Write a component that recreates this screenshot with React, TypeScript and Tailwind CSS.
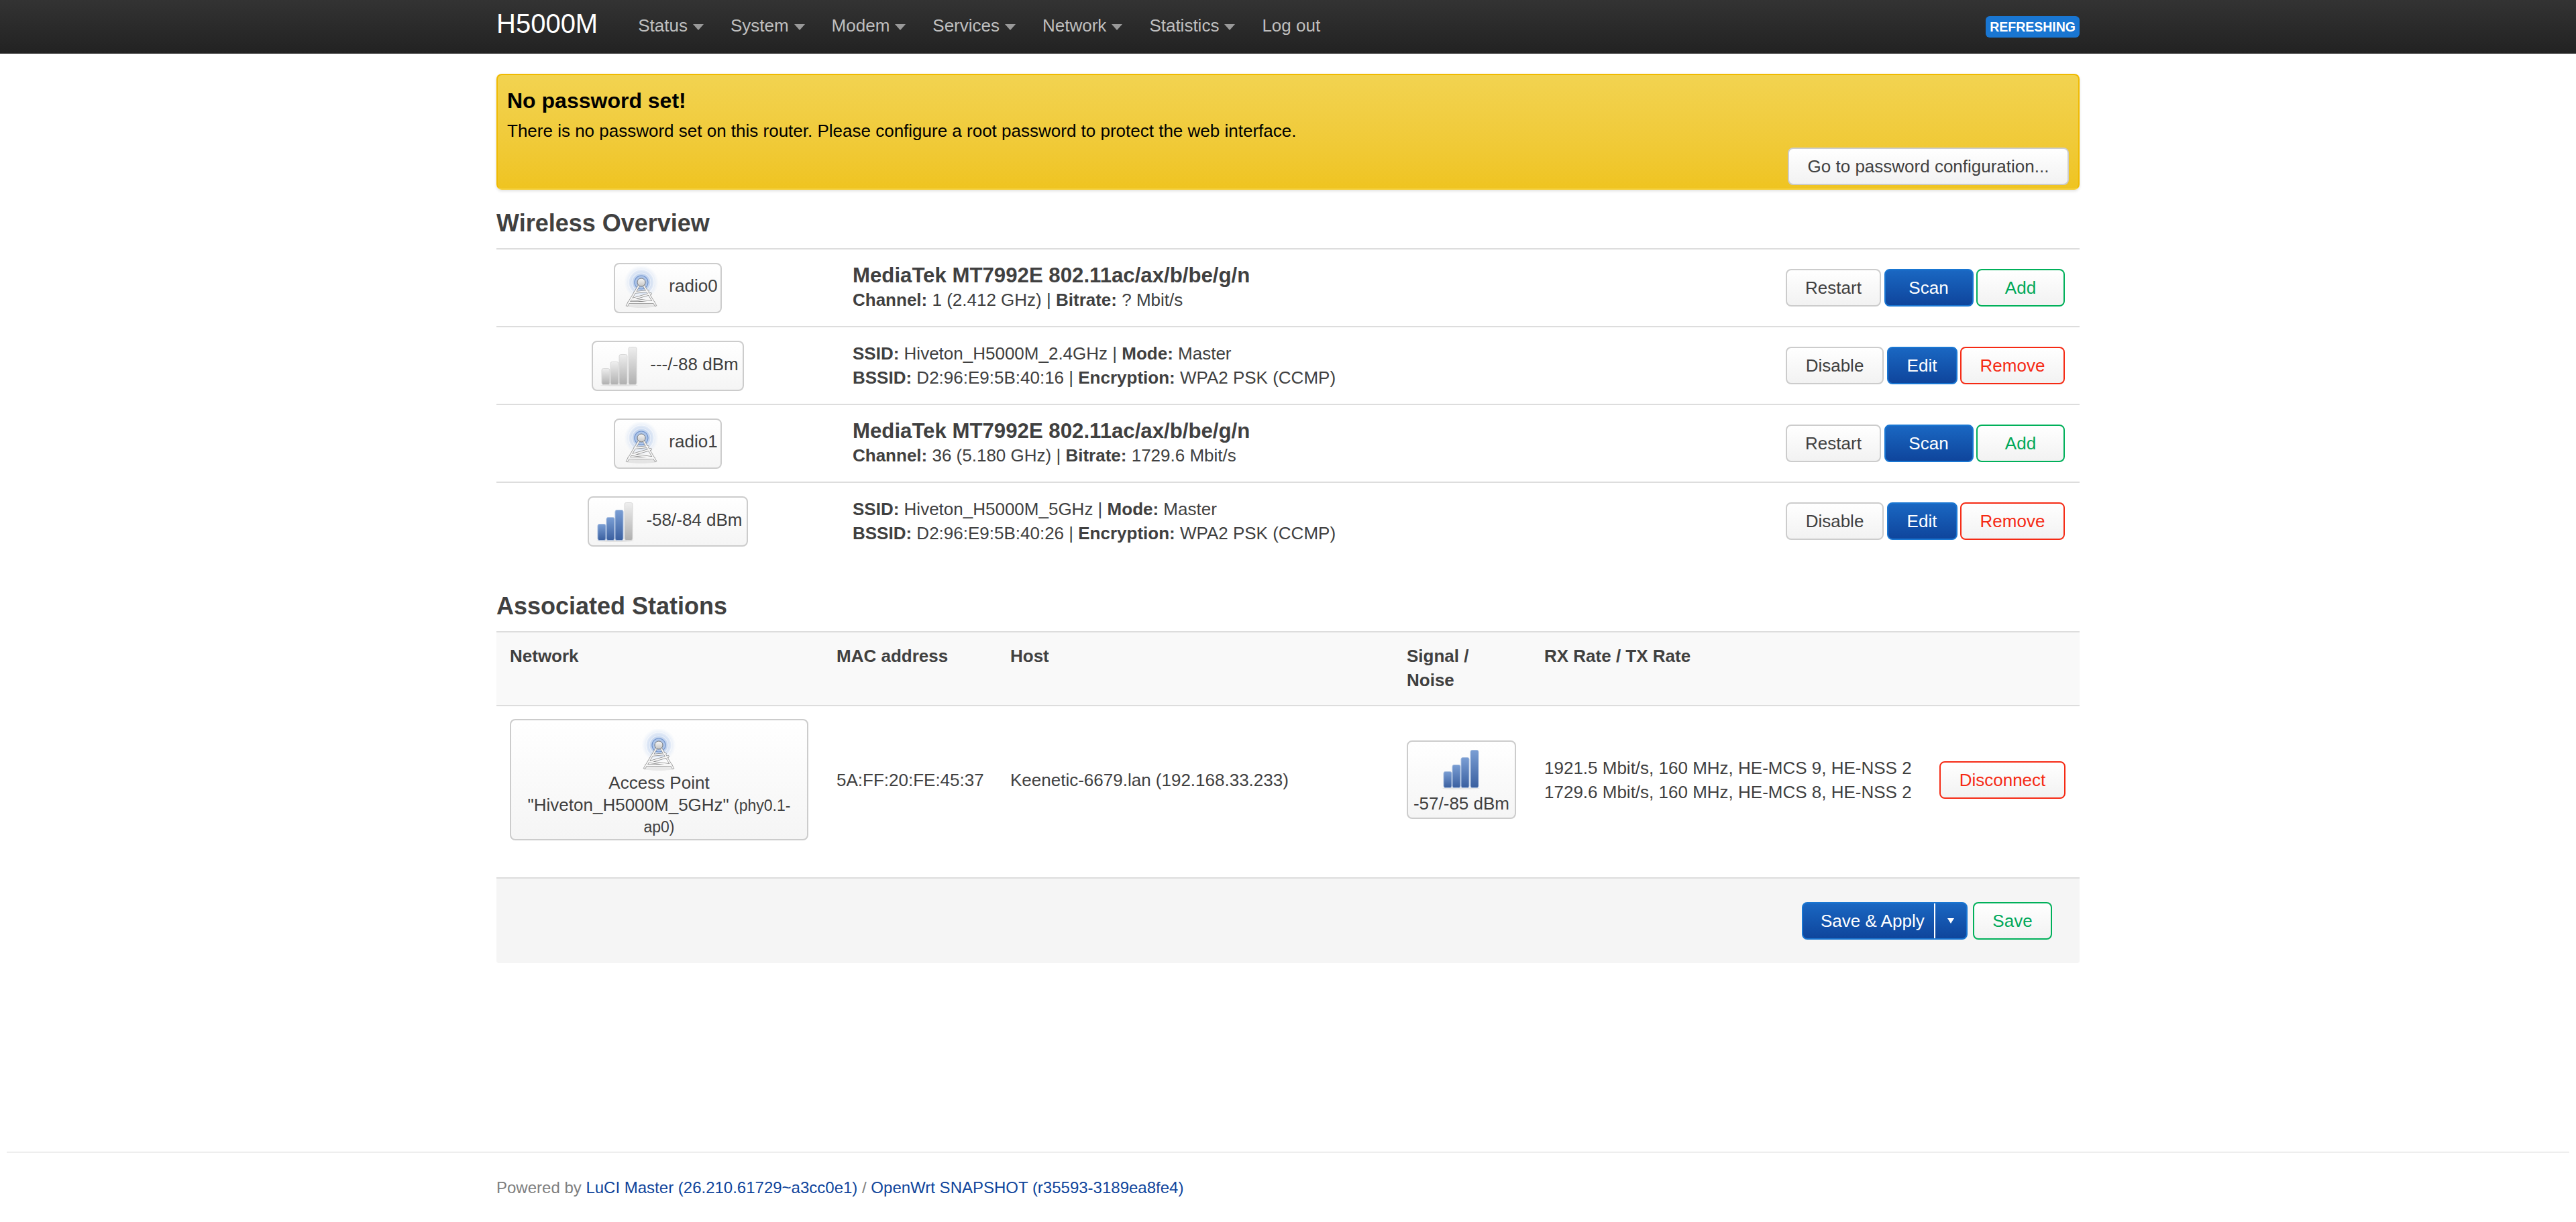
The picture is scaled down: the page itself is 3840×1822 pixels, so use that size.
import React from "react";

function Tower({ id }: { id: string }) {
  return (
    <svg width="64" height="64" viewBox="0 0 64 64" className="shrink-0">
      <defs>
        <radialGradient id={`${id}glow`} cx="50%" cy="50%" r="50%">
          <stop offset="0%" stopColor="#5f8cd2" stopOpacity="0.85" />
          <stop offset="45%" stopColor="#8fb0e2" stopOpacity="0.55" />
          <stop offset="75%" stopColor="#c2d4ef" stopOpacity="0.4" />
          <stop offset="100%" stopColor="#e6edf8" stopOpacity="0.1" />
        </radialGradient>
        <linearGradient id={`${id}ball`} x1="0" y1="0" x2="0" y2="1">
          <stop offset="0%" stopColor="#f8f8f8" />
          <stop offset="100%" stopColor="#c4c4c4" />
        </linearGradient>
      </defs>
      <ellipse cx="31" cy="59" rx="24" ry="3" fill="#000" opacity="0.07" />
      <circle cx="31" cy="24" r="25" fill={`url(#${id}glow)`} />
      <circle cx="31" cy="24" r="19" fill="none" stroke="#ffffff" strokeWidth="1.2" opacity="0.6" />
      <circle cx="31" cy="24" r="14" fill="none" stroke="#ffffff" strokeWidth="1.2" opacity="0.55" />
      <circle cx="31" cy="24" r="10" fill="none" stroke="#3f6db8" strokeWidth="1.2" opacity="0.6" />
      <g fill="none" strokeLinecap="round" strokeLinejoin="round">
        <path d="M28 28 L10 58 M34 28 L52 58 M17 49 L45 41 M21 39 L41 37 M12 54 L50 54 M17 49 L47 53" stroke="#8a8a8a" strokeWidth="3.4" />
        <path d="M28 28 L10 58 M34 28 L52 58 M17 49 L45 41 M21 39 L41 37 M12 54 L50 54 M17 49 L47 53" stroke="#f7f7f7" strokeWidth="1.9" />
      </g>
      <circle cx="31" cy="24" r="6" fill={`url(#${id}ball)`} stroke="#6f6f6f" strokeWidth="0.9" />
    </svg>
  );
}

const tops = [36.5, 26.5, 15.5, 4.5];
const xs = [5, 18, 31, 45];

function Bars({ on, id }: { on: number; id: string }) {
  return (
    <svg width="64" height="64" viewBox="0 0 64 64" className="shrink-0">
      <defs>
        <linearGradient id={`${id}g`} x1="0" y1="0" x2="0" y2="1">
          <stop offset="0%" stopColor="#eeeeee" />
          <stop offset="100%" stopColor="#b0b0b0" />
        </linearGradient>
        <linearGradient id={`${id}b`} x1="0" y1="0" x2="0" y2="1">
          <stop offset="0%" stopColor="#7a9ed4" />
          <stop offset="100%" stopColor="#3a5f9f" />
        </linearGradient>
      </defs>
      <ellipse cx="31" cy="61.5" rx="28" ry="1.5" fill="#000" opacity="0.08" />
      {tops.map((t, i) => (
        <rect
          key={i}
          x={xs[i]}
          y={t}
          width="12"
          height={60.5 - t}
          rx="2.5"
          fill={i < on ? `url(#${id}b)` : `url(#${id}g)`}
          stroke={i < on ? "#a9bfe0" : "#d9d9d9"}
          strokeWidth="1"
        />
      ))}
    </svg>
  );
}

const btnBase =
  "h-[56px] rounded-[8px] border-2 text-[26px] leading-[36px] flex items-center justify-center bg-gradient-to-b shrink-0";
const btnDefault = `${btnBase} border-[#cccccc] from-white to-[#f2f2f2] text-[#404040]`;
const btnBlue = `${btnBase} border-[#1976d2] from-[#1a67c2] to-[#0f459c] text-white`;
const btnGreen = `${btnBase} border-[#00b05a] from-white to-[#f2f2f2] text-[#00a85a]`;
const btnRed = `${btnBase} border-[#f52a14] from-white to-[#f2f2f2] text-[#f52a14]`;

const badge =
  "rounded-[8px] border-2 border-[#cccccc] bg-gradient-to-b from-white to-[#f5f5f5] text-[#404040] text-[26px] leading-[32.5px]";

function RadioRow({ name, id, channel, bitrate }: { name: string; id: string; channel: string; bitrate: string }) {
  return (
    <div className="grid grid-cols-[511px_1fr_auto] items-center h-[116px] border-t-2 border-[#dddddd]">
      <div className="flex justify-center">
        <div className={`${badge} flex items-center h-[75px] pl-[8px] pr-[4px] gap-[8px]`}>
          <Tower id={id} />
          <span className="pb-[5px]">{name}</span>
        </div>
      </div>
      <div className="pl-[20px] text-[#404040] pb-[1px]">
        <div className="text-[31.2px] leading-[37px] font-bold">MediaTek MT7992E 802.11ac/ax/b/be/g/n</div>
        <div className="text-[26px] leading-[36px]">
          <b>Channel:</b> {channel} | <b>Bitrate:</b> {bitrate}
        </div>
      </div>
      <div className="flex justify-end gap-[4.5px] pr-[22px]">
        <button className={`${btnDefault} w-[142px]`}>Restart</button>
        <button className={`${btnBlue} w-[133px]`}>Scan</button>
        <button className={`${btnGreen} w-[132px]`}>Add</button>
      </div>
    </div>
  );
}

function NetRow({ signal, on, id, ssid, bssid }: { signal: string; on: number; id: string; ssid: string; bssid: string }) {
  return (
    <div className="grid grid-cols-[511px_1fr_auto] items-center h-[116px] border-t-2 border-[#dddddd]">
      <div className="flex justify-center">
        <div className={`${badge} flex items-center h-[75px] pl-[8px] pr-[6px] gap-[13px]`}>
          <Bars on={on} id={id} />
          <span className="pb-[4px]">{signal}</span>
        </div>
      </div>
      <div className="pl-[20px] text-[#404040] text-[26px] leading-[36px]">
        <div>
          <b>SSID:</b> {ssid} | <b>Mode:</b> Master
        </div>
        <div>
          <b>BSSID:</b> {bssid} | <b>Encryption:</b> WPA2 PSK (CCMP)
        </div>
      </div>
      <div className="flex justify-end gap-[4.5px] pr-[22px]">
        <button className={`${btnDefault} w-[146px]`}>Disable</button>
        <button className={`${btnBlue} w-[105px]`}>Edit</button>
        <button className={`${btnRed} w-[156px]`}>Remove</button>
      </div>
    </div>
  );
}

const menu = ["Status", "System", "Modem", "Services", "Network", "Statistics"];

export default function App() {
  return (
    <div className="min-h-[1822px] flex flex-col bg-white font-['Liberation_Sans',Arial,sans-serif] text-[26px] leading-[36px] text-[#404040]">
      <header className="h-[80px] bg-gradient-to-b from-[#333333] to-[#222222]">
        <div className="w-[2360px] mx-auto h-full flex items-start">
          <div className="text-[40px] leading-[70px] text-white mr-[60px]">H5000M</div>
          <nav className="flex items-center h-[76px] gap-[40px] text-[#bfbfbf]">
            {menu.map((m) => (
              <span key={m} className="flex items-center gap-[8px]">
                {m}
                <span className="w-0 h-0 border-x-[8px] border-x-transparent border-t-[9px] border-t-[#999999] mt-[4px]" />
              </span>
            ))}
            <span>Log out</span>
          </nav>
          <div className="ml-auto mt-[24px] h-[32px] px-[6px] rounded-[6px] bg-[#1976d2] text-white text-[19.5px] leading-[32px] font-bold uppercase">
            Refreshing
          </div>
        </div>
      </header>

      <main className="w-[2360px] mx-auto pt-[30px]">
        <div className="h-[173px] rounded-[8px] border-2 border-[#f0ba00] border-b-[#f4d040] bg-gradient-to-b from-[#f2d350] to-[#efc420] shadow-[0_2px_4px_rgba(0,0,0,0.12)] px-[14px] pt-[20px] text-black flex flex-col">
          <div className="text-[32px] leading-[36px] font-bold">No password set!</div>
          <div className="mt-[9px]">There is no password set on this router. Please configure a root password to protect the web interface.</div>
          <div className="flex justify-end mt-[7px]">
            <button className={`${btnDefault} w-[419px]`}>Go to password configuration...</button>
          </div>
        </div>

        <h3 className="text-[36px] leading-[40px] font-bold mt-[30px] mb-[17px]">Wireless Overview</h3>
        <RadioRow name="radio0" id="t0" channel="1 (2.412 GHz)" bitrate="? Mbit/s" />
        <NetRow signal="---/-88 dBm" on={0} id="a" ssid="Hiveton_H5000M_2.4GHz" bssid="D2:96:E9:5B:40:16" />
        <RadioRow name="radio1" id="t1" channel="36 (5.180 GHz)" bitrate="1729.6 Mbit/s" />
        <NetRow signal="-58/-84 dBm" on={3} id="b" ssid="Hiveton_H5000M_5GHz" bssid="D2:96:E9:5B:40:26" />

        <h3 className="text-[36px] leading-[40px] font-bold mt-[50px] mb-[17px]">Associated Stations</h3>
        <div className="grid grid-cols-[487px_259px_591px_205px_588px_230px] h-[112px] border-y-2 border-[#dddddd] bg-[#f9f9f9] font-bold">
          <div className="pl-[20px] pt-[17px]">Network</div>
          <div className="pl-[20px] pt-[17px]">MAC address</div>
          <div className="pl-[20px] pt-[17px]">Host</div>
          <div className="pl-[20px] pt-[17px]">
            Signal /<br />
            Noise
          </div>
          <div className="pl-[20px] pt-[17px]">RX Rate / TX Rate</div>
          <div />
        </div>
        <div className="grid grid-cols-[487px_259px_591px_205px_588px_230px] items-center pt-[19px] pb-[55px]">
          <div className="pl-[20px] pr-[20px]">
            <div className={`${badge} flex flex-col items-center text-center w-[445px] h-[181px] pt-[13px] px-[10px]`}>
              <Tower id="t2" />
              <div>Access Point</div>
              <div>
                "Hiveton_H5000M_5GHz" <span className="text-[23px]">(phy0.1-</span>
              </div>
              <div className="text-[23px]">ap0)</div>
            </div>
          </div>
          <div className="pl-[20px]">5A:FF:20:FE:45:37</div>
          <div className="pl-[20px]">Keenetic-6679.lan (192.168.33.233)</div>
          <div className="pl-[20px]">
            <div className={`${badge} flex flex-col items-center w-[163px] h-[117px] pt-[8px]`}>
              <Bars on={4} id="c" />
              <div className="mt-[4px]">-57/-85 dBm</div>
            </div>
          </div>
          <div className="pl-[20px] whitespace-nowrap">
            1921.5 Mbit/s, 160 MHz, HE-MCS 9, HE-NSS 2
            <br />
            1729.6 Mbit/s, 160 MHz, HE-MCS 8, HE-NSS 2
          </div>
          <div className="flex justify-end pr-[21px]">
            <button className={`${btnRed} w-[188px]`}>Disconnect</button>
          </div>
        </div>
        <div className="h-[128px] border-t-2 border-[#dddddd] bg-[#f5f5f5] rounded-b-[4px] flex items-center justify-end gap-[8px] pr-[41px]">
          <div className={`${btnBlue} w-[247px]`}>
            <span className="w-[195px] pl-[26px] text-left">Save &amp; Apply</span>
            <span className="w-[2px] self-stretch bg-white" />
            <span className="flex-1 flex justify-center">
              <span className="w-0 h-0 border-x-[5px] border-x-transparent border-t-[8px] border-t-white" />
            </span>
          </div>
          <button className={`${btnGreen} w-[118px]`}>Save</button>
        </div>
      </main>

      <div className="flex-1" />
      <footer className="mx-[10px] border-t-2 border-[#eeeeee] h-[105px]">
        <div className="w-[2360px] mx-auto pt-[34px] text-[24px] leading-[36px] text-[#808080]">
          Powered by <span className="text-[#0f459c]">LuCI Master (26.210.61729~a3cc0e1)</span> /{" "}
          <span className="text-[#0f459c]">OpenWrt SNAPSHOT (r35593-3189ea8fe4)</span>
        </div>
      </footer>
    </div>
  );
}
